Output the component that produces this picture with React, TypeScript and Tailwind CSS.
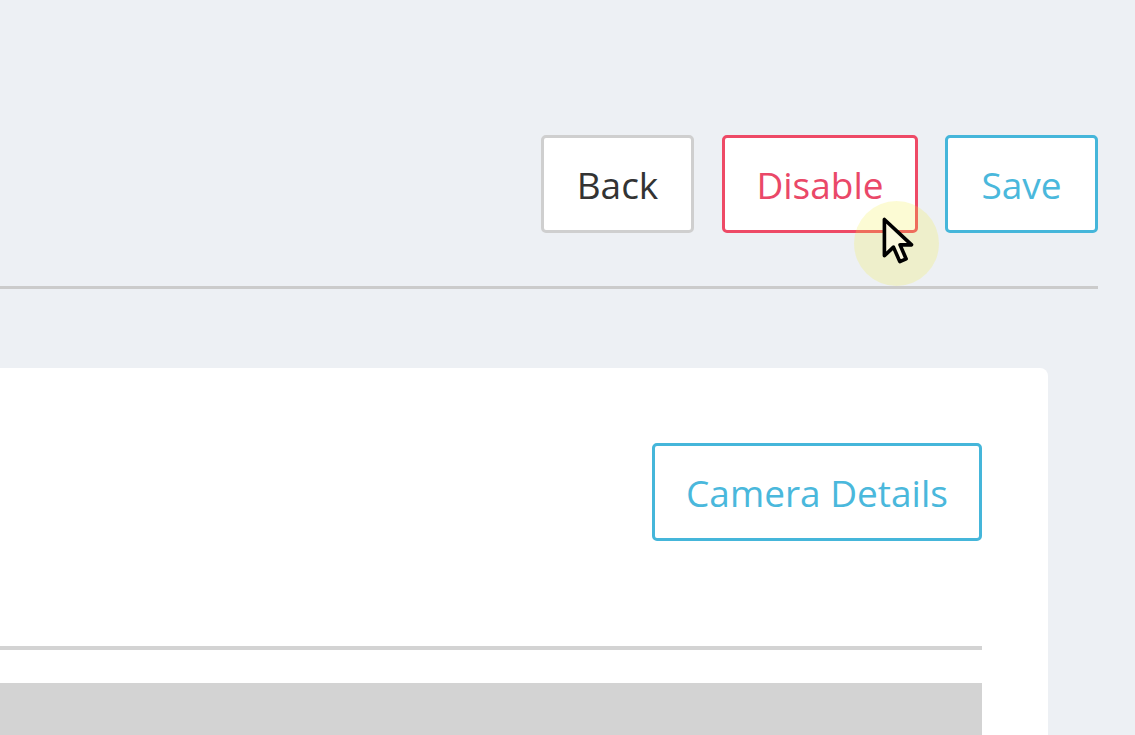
const Cursor = () => (
  <div className="pointer-events-none absolute left-[854px] top-[201px] h-[85px] w-[85px] rounded-full bg-[rgba(240,235,60,0.22)]">
    <svg
      className="absolute left-[27px] top-[14px]"
      width="34"
      height="52"
      viewBox="-1.5 -1.5 15 22"
    >
      <path
        d="M0 0 L0 16 L4 12.2 L6.8 18.6 L9.6 17.4 L6.9 11.2 L12 11.2 Z"
        fill="#fbf8de"
        stroke="#000"
        strokeWidth="1.6"
        strokeLinejoin="round"
      />
    </svg>
  </div>
);

const App = () => {
  return (
    <div className="relative h-[735px] w-full overflow-hidden bg-[#edf0f4] font-['Open_Sans',sans-serif] text-[37px]">
      <div className="pr-[37px] pt-[135px]">
        <div className="flex justify-end gap-[27px]">
          <button
            type="button"
            className="mr-px h-[98px] w-[153px] rounded-[5px] border-[3px] border-[#cfcfcf] bg-white pt-[2px] text-[#333333]"
          >
            Back
          </button>
          <button
            type="button"
            className="h-[98px] w-[196px] rounded-[5px] border-[3px] border-[#ee4a66] bg-white pt-[2px] text-[#ea4868]"
          >
            Disable
          </button>
          <button
            type="button"
            className="h-[98px] w-[153px] rounded-[5px] border-[3px] border-[#45b6da] bg-white pt-[2px] text-[#4ab8dc]"
          >
            Save
          </button>
        </div>
        <div className="mt-[53px] h-[3px] bg-[#cbcbcb]" />
      </div>

      <div className="mr-[87px] mt-[79px] h-[400px] rounded-tr-lg bg-white pr-[66px] pt-[75px]">
        <div className="flex justify-end">
          <button
            type="button"
            className="h-[98px] w-[330px] rounded-[5px] border-[3px] border-[#45b6da] bg-white pt-[2px] text-[#4ab8dc]"
          >
            Camera Details
          </button>
        </div>
        <div className="mt-[105px] h-[4px] bg-[#d3d3d3]" />
        <div className="mt-[33px] h-[120px] bg-[#d3d3d3]" />
      </div>

      <Cursor />
    </div>
  );
};

export default App;
